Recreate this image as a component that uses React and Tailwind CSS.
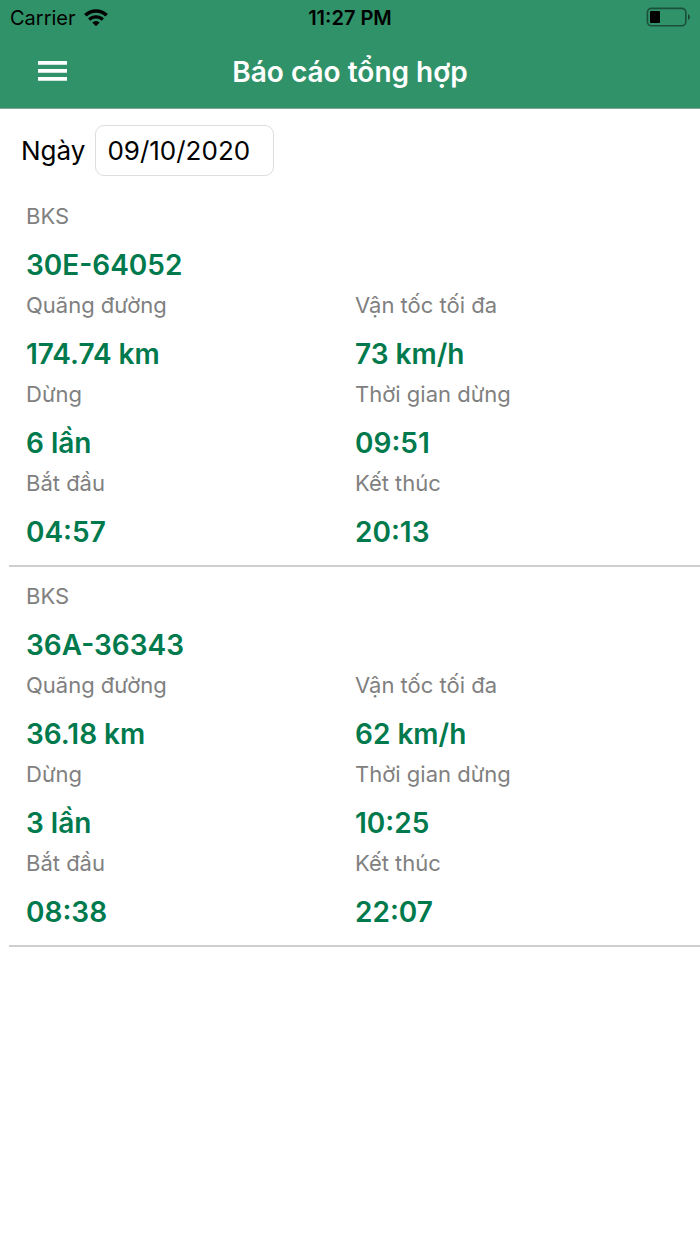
import { useState } from 'react';

const vehicles = [
  {
    plate: '30E-64052',
    distance: '174.74 km',
    maxSpeed: '73 km/h',
    stops: '6 lần',
    stopTime: '09:51',
    start: '04:57',
    end: '20:13',
  },
  {
    plate: '36A-36343',
    distance: '36.18 km',
    maxSpeed: '62 km/h',
    stops: '3 lần',
    stopTime: '10:25',
    start: '08:38',
    end: '22:07',
  },
];

function WifiIcon() {
  return (
    <svg className="w-6 h-[18px]" viewBox="0 0 24 18" fill="none" stroke="#000" aria-hidden="true">
      <path d="M1.3 6.3a15.3 15.3 0 0 1 21.4 0" strokeWidth="3.4" />
      <path d="M5.2 10.7a9.8 9.8 0 0 1 13.6 0" strokeWidth="3.2" />
      <path d="M8.3 13.6a5.3 5.3 0 0 1 7.4 0L12 17.2z" fill="#000" stroke="none" />
    </svg>
  );
}

function BatteryIcon() {
  return (
    <svg className="w-11 h-[22px]" viewBox="0 0 44 22" aria-hidden="true">
      <rect x="1.4" y="1.4" width="38.4" height="17.4" rx="4" fill="none" stroke="#000" strokeOpacity="0.45" strokeWidth="1.6" />
      <rect x="4" y="4" width="10" height="12" rx="1" fill="#000" />
      <path d="M42 7q2 .8 2 3t-2 3z" fill="#000" fillOpacity="0.5" />
    </svg>
  );
}

function StatusBar() {
  return (
    <div className="grid grid-cols-3 items-center h-9 px-[10px] text-xl text-black">
      <div className="flex items-center gap-2">
        <span>Carrier</span>
        <WifiIcon />
      </div>
      <div className="text-center font-semibold">11:27 PM</div>
      <div className="flex justify-end">
        <BatteryIcon />
      </div>
    </div>
  );
}

function Field({ label, value, className = '' }) {
  return (
    <div className={className}>
      <dt className="text-[22px] leading-7 text-[#808080]">{label}</dt>
      <dd className="mt-[17px] text-[28px] leading-9 font-semibold text-[#007A4D]">{value}</dd>
    </div>
  );
}

function VehicleReport({ vehicle }) {
  return (
    <li className="border-b-2 border-[#cfcfcf] py-[15px] pl-[17px] pr-4">
      <dl className="grid grid-cols-2 gap-y-2">
        <Field label="BKS" value={vehicle.plate} className="col-span-2" />
        <Field label="Quãng đường" value={vehicle.distance} />
        <Field label="Vận tốc tối đa" value={vehicle.maxSpeed} />
        <Field label="Dừng" value={vehicle.stops} />
        <Field label="Thời gian dừng" value={vehicle.stopTime} />
        <Field label="Bắt đầu" value={vehicle.start} />
        <Field label="Kết thúc" value={vehicle.end} />
      </dl>
    </li>
  );
}

export default function App() {
  const [date, setDate] = useState('09/10/2020');

  return (
    <div className="min-h-screen bg-white font-['Inter',sans-serif] text-black">
      <header className="bg-[#309269] border-b border-[#82a898]">
        <StatusBar />
        {/* Navigation bar */}
        <div className="grid grid-cols-[64px_1fr_64px] items-center h-[72px] px-[21px]">
          <button type="button" aria-label="Menu" className="flex justify-center items-center w-16 h-11">
            <svg className="w-[30px] h-[22px]" viewBox="0 0 30 22" fill="#fff" aria-hidden="true">
              <path d="M0 0h29v3.7H0zM0 8h29v3.7H0zM0 16h29v3.7H0z" />
            </svg>
          </button>
          <h1 className="text-center text-[28px] leading-9 font-semibold text-white">Báo cáo tổng hợp</h1>
        </div>
      </header>

      <main>
        <div className="flex items-center gap-[10px] pt-4 pb-[11px] px-[21px]">
          <label htmlFor="report-date" className="text-[26px] leading-8">Ngày</label>
          <input
            id="report-date"
            type="text"
            value={date}
            onChange={(e) => setDate(e.target.value)}
            className="w-[179px] h-[51px] rounded-[9px] border border-[#dedede] px-[11px] text-[26px] leading-8 outline-none"
          />
        </div>

        <ul className="pl-[9px]">
          {vehicles.map((vehicle) => (
            <VehicleReport key={vehicle.plate} vehicle={vehicle} />
          ))}
        </ul>
      </main>
    </div>
  );
}
